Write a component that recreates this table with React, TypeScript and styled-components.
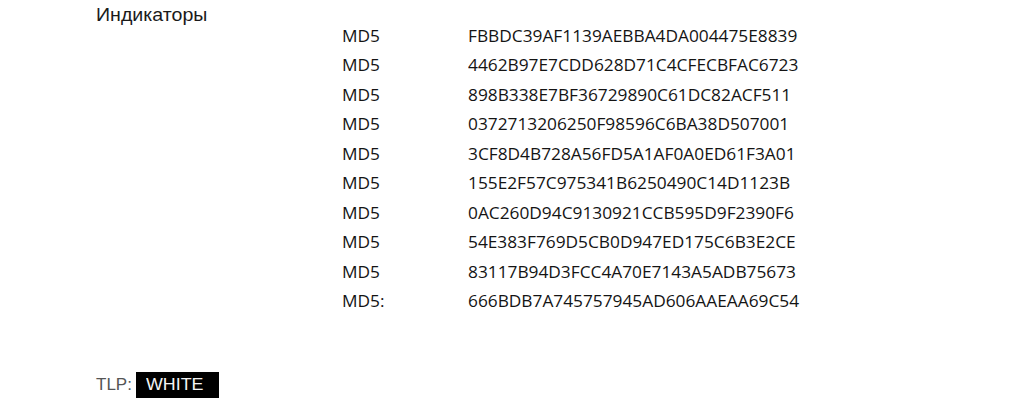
import React from "react";
import styled, { createGlobalStyle } from "styled-components";

const Global = createGlobalStyle`
  html, body { margin: 0; padding: 0; background: #ffffff; }
  #root { width: 1027px; height: 417px; overflow: hidden; }
`;

const Page = styled.div`
  display: flex;
  flex-direction: column;
  padding: 5px 0 0 96px;
  box-sizing: border-box;
  height: 417px;
`;

const Stretch = styled.span<{ $sx?: number }>`
  display: inline-block;
  transform: scaleX(${(p) => p.$sx ?? 1.08});
  transform-origin: left center;
  white-space: nowrap;
`;

const Heading = styled.div`
  font-family: "Liberation Sans", Arial, sans-serif;
  font-size: 17.5px;
  line-height: 20px;
  color: #1a1a1a;
  height: 20px;
`;

const Table = styled.div`
  display: grid;
  grid-template-columns: 126px auto;
  grid-auto-rows: 29.5px;
  align-items: center;
  margin: -4px 0 0 246px;
  font-family: "Open Sans", sans-serif;
  font-size: 16px;
  color: #141414;
`;

const Cell = styled.div`
  line-height: 20px;
`;

const Tlp = styled.div`
  display: flex;
  align-items: center;
  gap: 4px;
  margin-top: auto;
  margin-bottom: 19px;
  font-family: "Liberation Sans", Arial, sans-serif;
  font-size: 17px;
  color: #555;
`;

const Badge = styled.div`
  background: #000;
  color: #f4f4f4;
  width: 83px;
  height: 26px;
  box-sizing: border-box;
  padding-left: 10px;
  display: flex;
  align-items: center;
`;

const rows: [string, string][] = [
  ["MD5", "FBBDC39AF1139AEBBA4DA004475E8839"],
  ["MD5", "4462B97E7CDD628D71C4CFECBFAC6723"],
  ["MD5", "898B338E7BF36729890C61DC82ACF511"],
  ["MD5", "0372713206250F98596C6BA38D507001"],
  ["MD5", "3CF8D4B728A56FD5A1AF0A0ED61F3A01"],
  ["MD5", "155E2F57C975341B6250490C14D1123B"],
  ["MD5", "0AC260D94C9130921CCB595D9F2390F6"],
  ["MD5", "54E383F769D5CB0D947ED175C6B3E2CE"],
  ["MD5", "83117B94D3FCC4A70E7143A5ADB75673"],
  ["MD5:", "666BDB7A745757945AD606AAEAA69C54"],
];

export default function App() {
  return (
    <>
      <Global />
      <Page>
        <Heading>
          <Stretch $sx={1.12}>Индикаторы</Stretch>
        </Heading>
        <Table>
          {rows.map(([t, h], i) => (
            <React.Fragment key={i}>
              <Cell>
                <Stretch>{t}</Stretch>
              </Cell>
              <Cell>
                <Stretch>{h}</Stretch>
              </Cell>
            </React.Fragment>
          ))}
        </Table>
        <Tlp>
          <Stretch $sx={1}>TLP:</Stretch>
          <Badge>
            <Stretch $sx={1.05}>WHITE</Stretch>
          </Badge>
        </Tlp>
      </Page>
    </>
  );
}
